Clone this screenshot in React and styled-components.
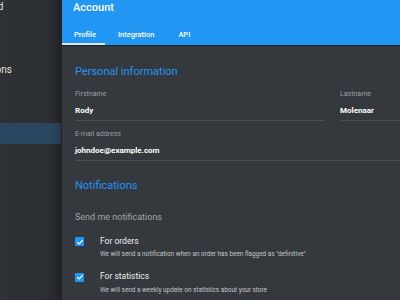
import styled, { createGlobalStyle } from "styled-components";

const GlobalStyle = createGlobalStyle`
  html, body {
    margin: 0;
    padding: 0;
    background: #35383d;
  }
  body {
    font-family: Roboto, "Liberation Sans", sans-serif;
  }
`;

function Checkbox() {
  return (
    <Box>
      <svg width="8" height="8" viewBox="0 0 8 8">
        <path d="M1.4 4.2 L3.2 5.9 L6.7 2.1" fill="none" stroke="#fff" strokeWidth="1.3" />
      </svg>
    </Box>
  );
}

function App() {
  return (
    <Page>
      <GlobalStyle />
      <Sidebar>
        <NavItem $top={-4}>Dashboard</NavItem>
        <NavItem $top={42}>Notifications</NavItem>
        <NavItem $top={43} $active>Settings</NavItem>
      </Sidebar>
      <Main>
        <Header>
          <Title>Account</Title>
          <Tabs>
            <Tab $active>Profile</Tab>
            <Tab>Integration</Tab>
            <Tab>API</Tab>
          </Tabs>
        </Header>
        <Content>
          <SectionTitle>Personal information</SectionTitle>
          <FormGrid>
            <Field>
              <Label>Firstname</Label>
              <Value>Rody</Value>
            </Field>
            <Field>
              <Label>Lastname</Label>
              <Value>Molenaar</Value>
            </Field>
            <Field $wide>
              <Label>E-mail address</Label>
              <Value>johndoe@example.com</Value>
            </Field>
          </FormGrid>
          <SectionTitle $gap={19}>Notifications</SectionTitle>
          <Subhead>Send me notifications</Subhead>
          <Option>
            <Checkbox />
            <div>
              <OptionTitle>For orders</OptionTitle>
              <OptionText>
                We will send a notification when an order has been flagged as "definitive"
              </OptionText>
            </div>
          </Option>
          <Option $gap={15}>
            <Checkbox />
            <div>
              <OptionTitle>For statistics</OptionTitle>
              <OptionText>We will send a weekly update on statistics about your store</OptionText>
            </div>
          </Option>
        </Content>
      </Main>
    </Page>
  );
}

const Page = styled.div`
  width: 400px;
  height: 300px;
  display: flex;
  overflow: hidden;
`;

const Sidebar = styled.div`
  width: 61px;
  flex-shrink: 0;
  overflow: hidden;
  background: linear-gradient(to right, #2e3136 0%, #2d3035 65%, #27292d 100%);
`;

const NavItem = styled.div`
  height: 21px;
  line-height: 21px;
  margin-top: ${(p) => p.$top || 0}px;
  text-indent: -45px;
  white-space: nowrap;
  font-size: 10px;
  color: ${(p) => (p.$active ? "transparent" : "#e2e2e2")};
  background: ${(p) => (p.$active ? "#2b4660" : "transparent")};
`;

const Main = styled.div`
  flex: 1;
  min-width: 0;
  display: flex;
  flex-direction: column;
  background: #35383d;
  border-left: 1px solid #232427;
  box-shadow: -4px 0 8px rgba(0, 0, 0, 0.2);
  overflow: hidden;
`;

const Header = styled.div`
  background: #2196f3;
  border-bottom: 1px solid #1e1f22;
`;

const Title = styled.div`
  padding: 2px 0 0 11px;
  font-size: 11px;
  line-height: 11px;
  font-weight: 500;
  color: #fff;
`;

const Tabs = styled.div`
  display: flex;
  margin-top: 10px;
`;

const Tab = styled.div`
  height: 22px;
  padding: 2px 11px 0 13px;
  display: flex;
  align-items: center;
  font-size: 7.5px;
  font-weight: 500;
  color: #fff;
  box-sizing: border-box;
  border-bottom: 2px solid ${(p) => (p.$active ? "#dfe7ec" : "transparent")};
  &:first-child {
    padding-left: 12px;
    padding-right: 9px;
  }
`;

const Content = styled.div`
  padding: 20px 0 0 13px;
`;

const SectionTitle = styled.div`
  margin-top: ${(p) => p.$gap || 0}px;
  font-size: 11px;
  line-height: 11px;
  color: #2196f3;
`;

const FormGrid = styled.div`
  display: grid;
  grid-template-columns: 250px 250px;
  column-gap: 15px;
  width: 515px;
`;

const Field = styled.div`
  grid-column: ${(p) => (p.$wide ? "1 / span 2" : "auto")};
  margin-top: ${(p) => (p.$wide ? 10 : 13.5)}px;
  padding-bottom: 5px;
  border-bottom: 1px solid #4b4e53;
`;

const Label = styled.div`
  font-size: 7px;
  line-height: 7px;
  color: #9c9fa4;
`;

const Value = styled.div`
  margin-top: 9px;
  font-size: 8px;
  line-height: 8px;
  font-weight: 700;
  color: #fff;
`;

const Subhead = styled.div`
  margin-top: 22px;
  font-size: 9px;
  line-height: 9px;
  color: #a2a5aa;
`;

const Option = styled.div`
  display: flex;
  align-items: flex-start;
  gap: 16px;
  margin-top: ${(p) => p.$gap || 15}px;
`;

const Box = styled.div`
  width: 9px;
  height: 9px;
  margin-top: 0.5px;
  flex-shrink: 0;
  display: flex;
  align-items: center;
  justify-content: center;
  background: #2196f3;
  border-radius: 1px;
`;

const OptionTitle = styled.div`
  font-size: 8.5px;
  line-height: 8.5px;
  color: #eceded;
`;

const OptionText = styled.div`
  margin-top: 6px;
  font-size: 6.4px;
  line-height: 6.4px;
  color: #c3c5c8;
  white-space: nowrap;
`;

export default App;
